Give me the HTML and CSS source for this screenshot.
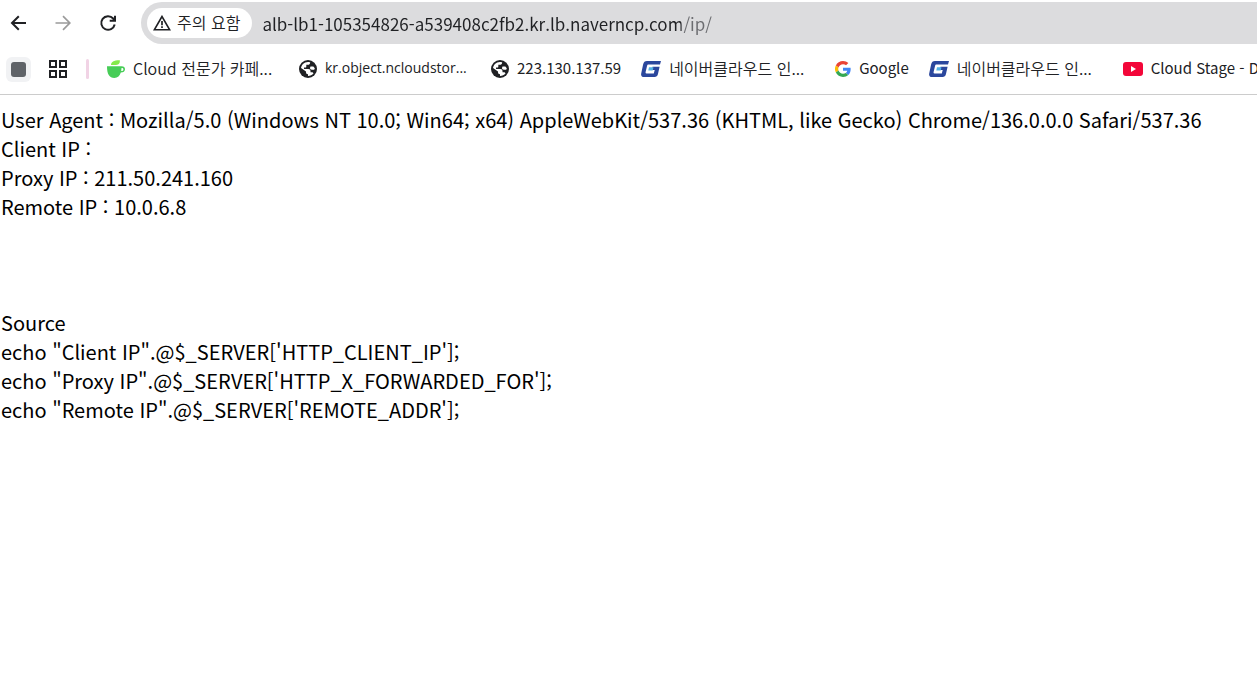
FILE: index.html
```html
<!DOCTYPE html>
<html lang="ko">
<head>
  <meta charset="utf-8">
  <title>IP</title>
  <link rel="stylesheet" href="styles.css">
</head>
<body>
  <!-- shared icons -->
  <svg class="sprite" aria-hidden="true">
    <symbol id="globe" viewBox="0 0 18 18">
      <circle cx="9" cy="9" r="9" fill="#202124"/>
      <path d="M2 9C2 5 5 2 9 2c.8 0 1.500.1 2.200.4-.1 1.500-.9 2.300-2.300 2.300H7.300v1.700c0 .8-.5 1.200-1.300 1.200H5v1.500h4.300c1.400 0 2.200.8 2.200 2v1.200h1.300c.8 0 1.400.5 1.700 1.200C13.200 15 11.300 16 9 16v-1.800c-1.300 0-2-.8-2-2v-.7L2.100 8z" fill="#fff"/>
      <path d="M10.800 4.500c.8-.2 1.300-.8 1.500-1.500 2.200 1.200 3.700 3.400 3.700 6 0 1.100-.3 2.200-.8 3.100-.5-.7-1.200-1.100-2-1.100V9.800c0-1.600-1.200-2.700-3-2.700H8.500c1.400-.3 2.100-1.200 2.300-2.600z" fill="#202124"/>
      <path d="M11.500 6.500h2.800l1.500 1.700-.6 1.500h-2.300c-1.200 0-1.900-.6-1.900-1.600z" fill="#fff"/>
    </symbol>
    <symbol id="navercloud" viewBox="0 0 20 18">
      <path d="M6 1h14l-1 3.500H7.500c-.8 0-1.200.4-1.400 1.200L4.600 12c-.2 1 .1 1.500 1 1.500h7.200l.9-3.500h-3l.8-3.300h7.100l-1.700 7.600c-.5 2-1.500 2.700-3.300 2.700H3.200C.8 17-.3 15.700.2 13.400L2.100 4.500C2.700 2 3.800 1 6 1z" fill="#2b479d"/>
      <path d="M8 7.200h4.500l-.8 3.300H7.300z" fill="#55b2e5"/>
    </symbol>
  </svg>

  <header>
    <nav class="toolbar">
      <button class="nav-button" aria-label="뒤로">
        <svg width="20" height="20" viewBox="0 0 20 20"><path d="M18 10H4M10.800 3.200L4 10l6.800 6.800" fill="none" stroke="#202124" stroke-width="2"/></svg>
      </button>
      <button class="nav-button" aria-label="앞으로" disabled>
        <svg width="20" height="20" viewBox="0 0 20 20"><path d="M2.500 10h14M10 3.200l6.800 6.800-6.800 6.800" fill="none" stroke="#9b9b9b" stroke-width="1.700"/></svg>
      </button>
      <button class="nav-button" aria-label="새로고침">
        <svg width="20" height="20" viewBox="0 0 20 20"><path d="M16.700 11.500a6.800 6.800 0 1 1-1.500-6l1.300 1.600M17 2.800v5h-5.300" fill="none" stroke="#202124" stroke-width="2"/></svg>
      </button>
      <div class="address-bar">
        <button class="security">
          <svg width="18" height="16" viewBox="0 0 18 16"><path d="M9 1.500L1.300 14.800h15.400z" fill="none" stroke="#202124" stroke-width="1.600"/><path d="M9 6v4.200M9 11.300V13" stroke="#202124" stroke-width="1.700"/></svg>
          <span class="label">주의 요함</span>
        </button>
        <input class="url" type="text" aria-label="주소창" spellcheck="false" value="alb-lb1-105354826-a539408c2fb2.kr.lb.naverncp.com/ip/">
      </div>
    </nav>

    <nav class="bookmarks">
      <button class="tab-group" aria-label="탭 그룹"><span></span></button>
      <button class="apps" aria-label="앱">
        <svg width="18" height="18" viewBox="0 0 18 18"><path d="M1 1h6v6H1zM11 1h6v6h-6zM1 11h6v6H1zM11 11h6v6h-6z" fill="none" stroke="#202124" stroke-width="2"/></svg>
      </button>
      <span class="divider"></span>
      <a class="bookmark" href="#">
        <svg width="18" height="18" viewBox="0 0 18 18"><path d="M4 5C4 2 6.500.3 12.800.2c.4 3.300-1.500 4.900-5 4.900z" fill="#84ea4b"/><path d="M0 6.300h14.500c2.400 0 3.500 1.300 3.500 3 0 2-1.600 3.300-4.200 3.300-1 3.600-3 5.400-6.500 5.400C2.300 18 0 14.300 0 6.300zm14.500 1.800l-.3 2.900c1.400 0 2.200-.6 2.200-1.600 0-.8-.6-1.300-1.900-1.300z" fill="#47cd57" fill-rule="evenodd"/></svg>
        <span class="label long hangul">Cloud 전문가 카페...</span>
      </a>
      <a class="bookmark" href="#">
        <svg width="18" height="18"><use href="#globe"/></svg>
        <span class="label long host">kr.object.ncloudstor...</span>
      </a>
      <a class="bookmark" href="#">
        <svg width="18" height="18"><use href="#globe"/></svg>
        <span class="label">223.130.137.59</span>
      </a>
      <a class="bookmark" href="#">
        <svg width="20" height="18"><use href="#navercloud"/></svg>
        <span class="label long hangul">네이버클라우드 인...</span>
      </a>
      <a class="bookmark" href="#">
        <svg width="16" height="16" viewBox="0 0 48 48"><path fill="#ea4335" d="M24 9.500c3.540 0 6.710 1.220 9.210 3.600l6.850-6.850C35.900 2.380 30.470 0 24 0 14.620 0 6.510 5.380 2.560 13.220l7.980 6.190C12.430 13.720 17.740 9.500 24 9.500z"/><path fill="#4285f4" d="M46.980 24.550c0-1.570-.15-3.090-.38-4.550H24v9.020h12.940c-.58 2.960-2.260 5.480-4.780 7.180l7.730 6c4.510-4.180 7.090-10.360 7.090-17.650z"/><path fill="#fbbc05" d="M10.530 28.590A14.500 14.500 0 0 1 10.530 19.410l-7.980-6.190a24 24 0 0 0 0 21.560z"/><path fill="#34a853" d="M24 48c6.480 0 11.930-2.130 15.890-5.810l-7.730-6c-2.150 1.450-4.920 2.300-8.160 2.300-6.260 0-11.570-4.220-13.470-9.910l-7.980 6.190C6.510 42.620 14.620 48 24 48z"/></svg>
        <span class="label">Google</span>
      </a>
      <a class="bookmark" href="#">
        <svg width="20" height="18"><use href="#navercloud"/></svg>
        <span class="label long hangul">네이버클라우드 인...</span>
      </a>
      <a class="bookmark" href="#">
        <svg width="20" height="14" viewBox="0 0 20 14"><rect width="20" height="14" rx="3" fill="#f30639"/><path d="M8 4v6l5-3z" fill="#fff"/></svg>
        <span class="label">Cloud Stage - D</span>
      </a>
    </nav>
  </header>

  <main>
    User Agent : Mozilla/5.0 (Windows NT 10.0; Win64; x64) AppleWebKit/537.36 (KHTML, like Gecko) Chrome/136.0.0.0 Safari/537.36<br>
    Client IP :<br>
    Proxy IP : 211.50.241.160<br>
    Remote IP : 10.0.6.8<br>
    <br>
    <br>
    <br>
    Source<br>
    echo "Client IP".@$_SERVER['HTTP_CLIENT_IP'];<br>
    echo "Proxy IP".@$_SERVER['HTTP_X_FORWARDED_FOR'];<br>
    echo "Remote IP".@$_SERVER['REMOTE_ADDR'];
  </main>
</body>
</html>
```
FILE: styles.css
```css
* {
  box-sizing: border-box;
}

body {
  margin: 0;
  background: #fff;
  color: #000;
  font-family: "Noto Sans CJK KR", sans-serif;
}

button {
  border: 0;
  padding: 0;
  background: none;
  color: inherit;
  font: inherit;
}

svg {
  flex: none;
}

.sprite {
  position: absolute;
  width: 0;
  height: 0;
}

header {
  border-bottom: 1px solid #ccc;
  color: #202124;
}

.toolbar {
  display: flex;
  align-items: center;
  gap: 25px;
  padding: 2px 0 0 8px;
}

.nav-button {
  display: flex;
}

.address-bar {
  flex: 1;
  display: flex;
  align-items: center;
  gap: 10px;
  height: 42px;
  margin-left: -2px;
  padding-left: 6px;
  border-radius: 21px 0 0 21px;
  background: #dcdcde;
}

.security {
  display: flex;
  align-items: center;
  gap: 6px;
  height: 30px;
  padding: 0 12px 0 6px;
  border-radius: 15px;
  background: #fff;
  font-size: 16px;
  font-weight: 350;
  line-height: 20px;
}

.url {
  flex: 1;
  min-width: 0;
  height: 30px;
  border: 0;
  padding: 0;
  outline: 0;
  color: #202124;
  /* host is dark, path is grey */
  background: linear-gradient(to right, #202124 419px, #6b6c70 419px);
  -webkit-background-clip: text;
  background-clip: text;
  -webkit-text-fill-color: transparent;
  font-family: inherit;
  font-size: 17px;
}

.bookmarks {
  display: flex;
  align-items: center;
  height: 50px;
  padding-left: 6px;
  overflow: hidden;
}

.tab-group {
  flex: none;
  display: grid;
  place-items: center;
  width: 25px;
  height: 25px;
  border-radius: 6px;
  background: #f1f2f4;
}

.tab-group span {
  width: 15px;
  height: 15px;
  border-radius: 3px;
  background: #5f6368;
}

.apps {
  display: flex;
  margin: 0 19px 0 18px;
}

.divider {
  flex: none;
  width: 3px;
  height: 20px;
  margin-right: 18px;
  border-radius: 2px;
  background: #f1d3e5;
}

.bookmark {
  flex: none;
  display: flex;
  align-items: center;
  gap: 8px;
  margin-right: 20px;
  color: inherit;
  font-size: 15px;
  line-height: 20px;
  text-decoration: none;
}

.label {
  padding-bottom: 2px;
  white-space: nowrap;
}

.long {
  width: 146px;
}

.hangul {
  font-size: 16px;
  font-weight: 350;
}

.host {
  font-family: "Open Sans", sans-serif;
  font-size: 14px;
}

main {
  padding: 10px 1px;
  font-size: 20px;
  line-height: 29px;
}
```
